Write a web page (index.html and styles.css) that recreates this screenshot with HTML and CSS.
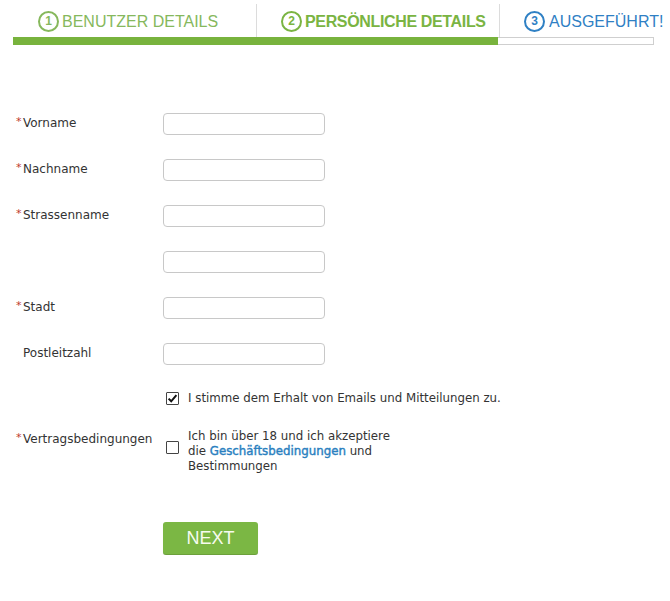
FILE: index.html
```html
<!DOCTYPE html>
<html lang="de">
<head>
<meta charset="utf-8">
<title>Registrierung</title>
<link rel="stylesheet" href="styles.css">
</head>
<body>
<div class="steps">
  <div class="tabs">
    <div class="tab tab-done"><span class="num">1</span><span class="tab-text">BENUTZER DETAILS</span></div>
    <div class="tab tab-active"><span class="num">2</span><span class="tab-text">PERSÖNLICHE DETAILS</span></div>
    <div class="tab tab-next"><span class="num">3</span><span class="tab-text">AUSGEFÜHRT!</span></div>
  </div>
  <div class="progress"><div class="fill"></div><div class="rest"></div></div>
</div>

<form class="form">
  <div class="row">
    <label class="label"><span class="star">*</span>Vorname</label>
    <input class="field" type="text">
  </div>
  <div class="row">
    <label class="label"><span class="star">*</span>Nachname</label>
    <input class="field" type="text">
  </div>
  <div class="row">
    <label class="label"><span class="star">*</span>Strassenname</label>
    <input class="field" type="text">
  </div>
  <div class="row">
    <label class="label"><span class="star"></span></label>
    <input class="field" type="text">
  </div>
  <div class="row">
    <label class="label"><span class="star">*</span>Stadt</label>
    <input class="field" type="text">
  </div>
  <div class="row">
    <label class="label"><span class="star"></span>Postleitzahl</label>
    <input class="field" type="text">
  </div>

  <div class="check-row check-first">
    <div class="label"></div>
    <span class="box"><svg viewBox="0 0 13 13" width="13" height="13"><path d="M2.6 6.6 L5.2 9.3 L10.4 3.2" fill="none" stroke="#111" stroke-width="2"/></svg></span>
    <span class="check-text">I stimme dem Erhalt von Emails und Mitteilungen zu.</span>
  </div>

  <div class="check-row check-terms">
    <div class="label"><span class="star">*</span>Vertragsbedingungen</div>
    <span class="box box-terms"></span>
    <span class="check-text">Ich bin über 18 und ich akzeptiere<br>die <a class="link" href="#">Geschäftsbedingungen</a> und<br>Bestimmungen</span>
  </div>

  <div class="actions">
    <button class="next" type="button">NEXT</button>
  </div>
</form>
</body>
</html>
```
FILE: styles.css
```css
html, body {
  margin: 0;
  padding: 0;
  background: #ffffff;
}
body {
  font-family: "DejaVu Sans", Verdana, sans-serif;
  font-size: 12px;
  color: #333333;
  overflow: hidden;
}

.steps {
  padding-left: 13px;
  padding-top: 4px;
}
.tabs {
  display: flex;
  height: 33px;
  white-space: nowrap;
}
.tab {
  box-sizing: border-box;
  width: 243px;
  flex: none;
  padding-left: 25px;
  display: flex;
  align-items: center;
  font-family: "Liberation Sans", Arial, sans-serif;
  font-size: 16px;
}
.tab + .tab {
  border-left: 1px solid #dcdcdc;
  padding-left: 24px;
}
.tab-next {
  width: auto;
}
.num {
  box-sizing: border-box;
  width: 21px;
  height: 21px;
  border: 2px solid currentColor;
  border-radius: 50%;
  display: flex;
  align-items: center;
  justify-content: center;
  font-size: 12px;
  font-weight: bold;
  margin-right: 3px;
  margin-top: 1px;
}
.tab-text {
  margin-top: 2px;
}
.tab-done { color: #86b85c; }
.tab-active { color: #7ab442; }
.tab-active .tab-text { font-weight: bold; letter-spacing: -0.35px; }
.tab-next { color: #2f80c4; }
.tab-next .num { margin-right: 4px; }

.progress {
  display: flex;
  width: 641px;
  height: 8px;
}
.fill {
  width: 485px;
  background: #78b33d;
}
.rest {
  flex: 1;
  border: 1px solid #cfcfcf;
  border-left: none;
  background: #fff;
}

.form {
  margin-top: 68px;
}
.row {
  display: flex;
  align-items: center;
  height: 22px;
  margin-bottom: 24px;
}
.label {
  box-sizing: border-box;
  width: 163px;
  flex: none;
  padding-left: 16px;
  padding-bottom: 3px;
  color: #333;
}
.star {
  display: inline-block;
  width: 7px;
  color: #c0392b;
  font-size: 11px;
  vertical-align: 2px;
}
.field {
  box-sizing: border-box;
  width: 162px;
  height: 22px;
  margin: 0;
  border: 1px solid #c8c8c8;
  border-radius: 4px;
  background: #fff;
  font: inherit;
}

.check-row {
  display: flex;
  align-items: flex-start;
  line-height: 15px;
}
.check-first {
  margin-top: 26px;
}
.check-terms {
  margin-top: 23px;
}
.check-terms .label {
  padding-top: 1px;
  padding-bottom: 0;
}
.check-first .label {
  padding-bottom: 0;
}
.box {
  box-sizing: border-box;
  flex: none;
  width: 13px;
  height: 13px;
  margin: 1px 9px 0 3px;
  border: 1px solid #444;
  border-radius: 1px;
  background: #fff;
  display: flex;
  align-items: center;
  justify-content: center;
}
.box svg {
  display: block;
  flex: none;
}
.box-terms {
  margin-top: 12px;
}
.check-text {
  color: #333;
  font-size: 11.8px;
}
.link {
  color: #2a7fc0;
  text-decoration: none;
  -webkit-text-stroke: 0.4px #2a7fc0;
}

.actions {
  padding-left: 163px;
  margin-top: 48px;
}
.next {
  width: 95px;
  height: 33px;
  border: none;
  border-radius: 3px;
  background: #7bb744;
  box-shadow: inset 0 -1px 0 rgba(0,0,0,0.12), 0 1px 1px rgba(0,0,0,0.08);
  color: #f6fbef;
  font-family: "Liberation Sans", Arial, sans-serif;
  font-size: 18px;
  padding: 0;
  cursor: pointer;
}
```
